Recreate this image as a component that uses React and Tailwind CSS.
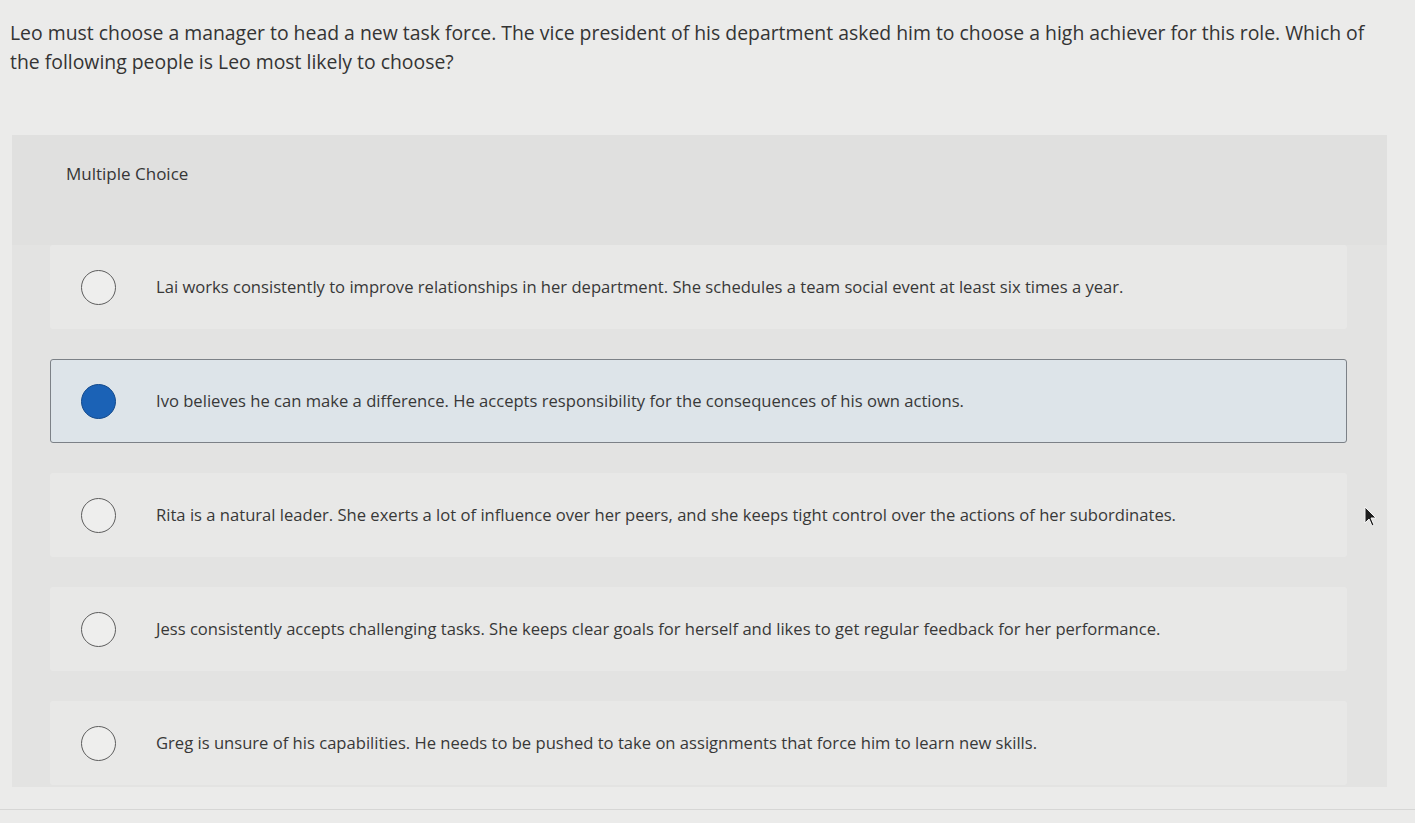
import React from 'react';

const options = [
  { id: 'lai', text: 'Lai works consistently to improve relationships in her department. She schedules a team social event at least six times a year.' },
  { id: 'ivo', text: 'Ivo believes he can make a difference. He accepts responsibility for the consequences of his own actions.', selected: true },
  { id: 'rita', text: 'Rita is a natural leader. She exerts a lot of influence over her peers, and she keeps tight control over the actions of her subordinates.' },
  { id: 'jess', text: 'Jess consistently accepts challenging tasks. She keeps clear goals for herself and likes to get regular feedback for her performance.' },
  { id: 'greg', text: 'Greg is unsure of his capabilities. He needs to be pushed to take on assignments that force him to learn new skills.' },
];

const Radio = ({ checked }) =>
  checked ? (
    <span className="w-[35px] h-[35px] rounded-full shrink-0 bg-[#1b62b6] border-[1.5px] border-[#134a8c]" />
  ) : (
    <span className="w-[35px] h-[35px] rounded-full shrink-0 bg-[#eeeeed] border-[1.5px] border-[#5d5d5d]" />
  );

const Option = ({ text, selected }) => (
  <div
    className={
      'flex items-center h-[84px] pl-[30px] rounded-[3px] ' +
      (selected
        ? 'bg-[#dde4e9] border-[1.5px] border-[#7c8187]'
        : 'bg-[#e8e8e7] border-[1.5px] border-transparent')
    }
  >
    <Radio checked={selected} />
    <span className="ml-[40px] text-[16.6px] leading-[22px] text-[#383838]">{text}</span>
  </div>
);

export default function App() {
  return (
    <div
      className="relative w-full h-[823px] overflow-hidden bg-[#ebebea]"
      style={{ fontFamily: '"Open Sans", Lato, Arial, sans-serif' }}
    >
      <p className="pl-[10px] pt-[18px] w-[1385px] text-[19.4px] leading-[29px] text-[#343434]">
        Leo must choose a manager to head a new task force. The vice president of his department asked him to choose a high achiever for this role. Which of the following people is Leo most likely to choose?
      </p>

      <div className="mt-[59px] ml-[12px] w-[1375px] bg-[#e3e3e2] pb-[2px]">
        <div className="pl-[54px] pt-[27px] h-[110px] bg-[#e0e0df]">
          <span className="text-[17px] leading-[22px] text-[#363636]">Multiple Choice</span>
        </div>
        <div className="ml-[38px] w-[1297px] flex flex-col gap-[30px]">
          {options.map((o) => (
            <Option key={o.id} text={o.text} selected={o.selected} />
          ))}
        </div>
      </div>

      <div className="mt-[22px] h-px bg-[#d6d6d5]" />

      {/* mouse pointer */}
      <svg className="absolute left-[1364px] top-[506px]" width="14" height="22" viewBox="0 0 14 22">
        <path d="M1 1 L1 17 L5 13 L8 20 L10 19 L7 12 L12 12 Z" fill="#1e1e1e" stroke="#f5f5f5" strokeWidth="1" />
      </svg>
    </div>
  );
}
